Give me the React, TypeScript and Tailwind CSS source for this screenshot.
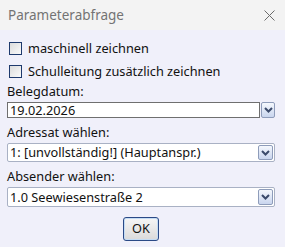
import React from "react";

const Chevron = () => (
  <svg width="9" height="6" viewBox="0 0 9 6">
    <path d="M1 1 L4.5 4.5 L8 1" fill="none" stroke="#3b4a6b" strokeWidth="2" />
  </svg>
);

const DropBtn = ({ cls }: { cls: string }) => (
  <div
    className={
      "flex items-center justify-center border border-[#8e9cba] rounded-[2px] bg-gradient-to-b from-[#f5f8fd] to-[#c9d5ee] " +
      cls
    }
  >
    <Chevron />
  </div>
);

const Check = ({ label }: { label: string }) => (
  <div className="flex items-center h-[23px] pl-[2px]">
    <div className="w-[13px] h-[13px] border border-[#1e3a6d] bg-gradient-to-br from-[#dcdcdc] to-[#fafafa]" />
    <span className="ml-[6px] text-[12.75px] text-[#111]">{label}</span>
  </div>
);

const Select = ({ value }: { value: string }) => (
  <div className="flex items-center h-[19px] border border-[#a9b1c4] rounded-[2px] bg-white pl-[2px] pr-[1px]">
    <span className="flex-1 text-[12.75px] text-[#111] leading-none">{value}</span>
    <DropBtn cls="w-[15px] h-[15px]" />
  </div>
);

export default function App() {
  return (
    <div
      className="w-[285px] h-[247px] flex flex-col bg-[#f0f0fa]"
      style={{ fontFamily: '"Noto Sans", sans-serif' }}
    >
      <div className="h-[30px] flex items-center justify-between bg-[#f3f3f3] pl-[8px] pr-[10px]">
        <span className="text-[13.5px] text-[#737373]">Parameterabfrage</span>
        <svg width="11" height="11" viewBox="0 0 11 11">
          <path d="M0.5 0.5 L10.5 10.5 M10.5 0.5 L0.5 10.5" stroke="#6b6b6b" strokeWidth="1" />
        </svg>
      </div>
      <div className="flex flex-col pl-[7px] pr-[10px] pt-[7px]">
        <Check label="maschinell zeichnen" />
        <Check label="Schulleitung zusätzlich zeichnen" />
        <div className="h-[18px] flex items-center text-[12.75px] text-[#111]">Belegdatum:</div>
        <div className="flex items-center gap-[1px] mt-[1px]">
          <div className="flex-1 h-[16px] border border-[#6f6f6f] bg-white flex items-center pl-[2px] text-[12.75px] text-[#111] leading-none">
            19.02.2026
          </div>
          <DropBtn cls="w-[14px] h-[16px]" />
        </div>
        <div className="h-[25px] flex items-end pb-[1px] text-[12.75px] text-[#111]">Adressat wählen:</div>
        <Select value="1: [unvollständig!] (Hauptanspr.)" />
        <div className="h-[25px] flex items-end pb-[1px] text-[12.75px] text-[#111]">Absender wählen:</div>
        <div className="h-[20px] flex items-center border border-[#a9b1c4] rounded-[2px] bg-white pl-[2px] pr-[1px]">
          <span className="flex-1 text-[12.75px] text-[#111] leading-none">1.0 Seewiesenstraße 2</span>
          <DropBtn cls="w-[15px] h-[16px]" />
        </div>
        <div className="flex justify-center mt-[10px]">
          <button className="w-[36px] h-[24px] rounded-[3px] border border-[#2b4a86] bg-gradient-to-b from-[#f6f6f6] to-[#dadada] text-[12.75px] text-[#111] shadow-[inset_0_0_0_1px_#c4dcf4]">
            OK
          </button>
        </div>
      </div>
    </div>
  );
}
